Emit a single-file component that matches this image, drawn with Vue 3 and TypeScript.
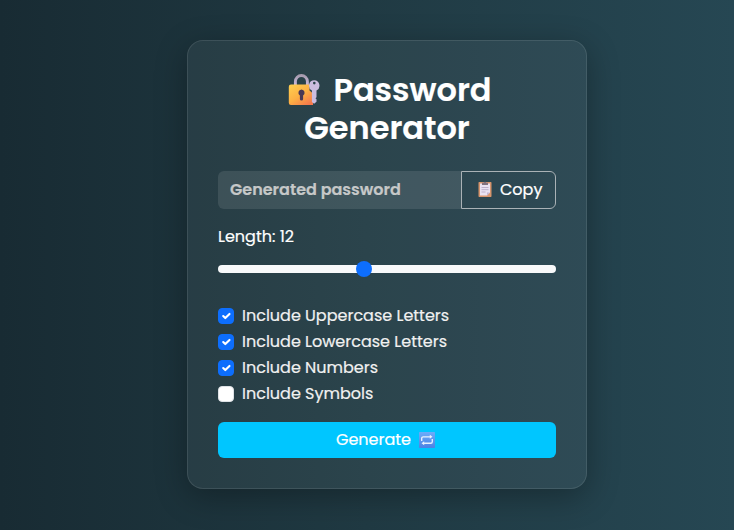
<script setup lang="ts">
import { computed, reactive, ref } from 'vue'

interface Option {
  id: string
  label: string
  chars: string
  checked: boolean
}

const length = ref(12)
const password = ref('')
const options = reactive<Option[]>([
  { id: 'uppercase', label: 'Include Uppercase Letters', chars: 'ABCDEFGHIJKLMNOPQRSTUVWXYZ', checked: true },
  { id: 'lowercase', label: 'Include Lowercase Letters', chars: 'abcdefghijklmnopqrstuvwxyz', checked: true },
  { id: 'numbers', label: 'Include Numbers', chars: '0123456789', checked: true },
  { id: 'symbols', label: 'Include Symbols', chars: '!@#$%^&*()_+', checked: false },
])

const pool = computed(() => options.filter((o) => o.checked).map((o) => o.chars).join(''))

function generate(): void {
  const chars = pool.value
  password.value = chars
    ? Array.from({ length: length.value }, () => chars[Math.floor(Math.random() * chars.length)]).join('')
    : ''
}

function copy(): void {
  if (password.value) navigator.clipboard?.writeText(password.value)
}
</script>

<template>
  <main class="page">
    <section class="card">
      <h1 class="title">
        <span class="title-line">
          <svg class="lock" viewBox="0 0 32 32" aria-hidden="true">
            <defs>
              <linearGradient id="gold" x1="0" y1="0" x2="0.8" y2="1">
                <stop offset="0" stop-color="#ffd04f" />
                <stop offset="0.55" stop-color="#fdb044" />
                <stop offset="1" stop-color="#f5784c" />
              </linearGradient>
              <linearGradient id="steel" x1="0" y1="0" x2="0" y2="1">
                <stop offset="0" stop-color="#a79caf" />
                <stop offset="1" stop-color="#cdbbe0" />
              </linearGradient>
            </defs>
            <path d="M7.4 12V7.500a6 6 0 0 1 12 0V12" fill="none" stroke="url(#steel)" stroke-width="2.9" />
            <path d="M3 10.500h18.500v6l3.500 3V31H3a2.200 2.200 0 0 1-2.200-2.200V12.700A2.200 2.200 0 0 1 3 10.500z" fill="url(#gold)" />
            <path d="M13.500 15.500a3.200 3.200 0 0 0-1.600 5.900V25a1.600 1.600 0 0 0 3.200 0v-3.600A3.200 3.200 0 0 0 13.500 15.500z" fill="#493755" />
            <path fill-rule="evenodd" d="M26.300 6.300a5.400 5.400 0 0 0-2.400 10.200V28l2.200 1.800 2.400-2v-2.600l-1-1 1-1v-6.700A5.400 5.400 0 0 0 26.300 6.300zm0 1.500a1.300 1.300 0 1 1 0 2.600 1.300 1.300 0 0 1 0-2.600z" fill="#cbbcdf" />
          </svg>
          <span>Password</span>
        </span>
        <span>Generator</span>
      </h1>

      <div class="output">
        <input v-model="password" class="password" type="text" placeholder="Generated password" readonly />
        <button class="copy" type="button" @click="copy">
          <svg class="clipboard" viewBox="0 0 14 16" aria-hidden="true">
            <rect x="0.500" y="1" width="13" height="15" rx="0.700" fill="#d8956d" />
            <path d="M2 2.500h10v9L9 14.500H2z" fill="#e9e2f2" />
            <path d="M12 11.500H9v3z" fill="#c3b4d2" />
            <path d="M4 4V1.700h1.700a1.400 1.400 0 0 1 2.600 0H10V4z" fill="#81727f" />
            <path d="M3.500 6.500h7M3.500 8.700h7M3.500 11h4" stroke="#b7aac6" stroke-width="0.900" />
          </svg>
          <span>Copy</span>
        </button>
      </div>

      <label class="length" for="length">Length: {{ length }}</label>
      <input id="length" v-model.number="length" class="range" type="range" min="6" max="20" />

      <div class="options">
        <label v-for="option in options" :key="option.id" class="option">
          <input v-model="option.checked" class="native" type="checkbox" />
          <span class="box" :class="{ on: option.checked }">
            <svg v-if="option.checked" viewBox="0 0 20 20" aria-hidden="true">
              <path d="m6 10 3 3 6-6" fill="none" stroke="#fff" stroke-width="3" stroke-linecap="round" stroke-linejoin="round" />
            </svg>
          </span>
          <span>{{ option.label }}</span>
        </label>
      </div>

      <button class="generate" type="button" @click="generate">
        <span>Generate</span>
        <svg class="repeat" viewBox="0 0 16 16" aria-hidden="true">
          <defs>
            <linearGradient id="tile" x1="0" y1="0" x2="0" y2="1">
              <stop offset="0" stop-color="#6cacfa" />
              <stop offset="1" stop-color="#4c82e4" />
            </linearGradient>
          </defs>
          <rect width="16" height="16" rx="0.800" fill="url(#tile)" />
          <path d="M2.700 9V6.300a1.500 1.500 0 0 1 1.500-1.500h7.500M13.300 7v2.700a1.500 1.500 0 0 1-1.500 1.500H4.300" fill="none" stroke="#e8f1ff" stroke-width="1.350" />
          <path d="M10.800 2.800 13.500 4.800 10.800 6.800zM5.200 9.200 2.500 11.200l2.700 2z" fill="#e8f1ff" />
        </svg>
      </button>
    </section>
  </main>
</template>

<style>
body {
  margin: 0;
}
</style>

<style scoped>
* {
  box-sizing: border-box;
}

.page {
  display: flex;
  align-items: flex-start;
  height: 530px;
  padding: 40px 0 0 187px;
  overflow: hidden;
  background: linear-gradient(to right, #182b33, #203a43 50%, #264753);
  color: #fff;
  font-family: Poppins, Inter, 'Noto Sans', sans-serif;
  font-size: 16px;
  line-height: 24px;
  -webkit-text-stroke: 0.2px currentColor;
}

.card {
  display: flex;
  flex-direction: column;
  width: 400px;
  height: 449px;
  padding: 30px;
  border: 1px solid rgba(255, 255, 255, 0.1);
  border-radius: 16px;
  background: rgba(255, 255, 255, 0.05);
  box-shadow: 0 8px 32px rgba(0, 0, 0, 0.3);
}

.title {
  display: flex;
  flex-direction: column;
  align-items: center;
  margin: 0 0 24px;
  font-size: 32px;
  font-weight: 600;
  line-height: 38px;
}

.title-line {
  display: flex;
  align-items: center;
  gap: 13px;
  padding-left: 6px;
}

.lock {
  width: 32px;
  height: 32px;
}

.output {
  display: flex;
  height: 38px;
  margin-bottom: 16px;
}

.password {
  flex: 1;
  min-width: 0;
  padding: 0 12px;
  border: 0;
  border-radius: 6px 0 0 6px;
  background: rgba(255, 255, 255, 0.1);
  color: #fff;
  font: inherit;
  font-weight: 600;
  outline: none;
}

.password::placeholder {
  color: #c6c8c8;
  opacity: 1;
}

.copy {
  display: flex;
  align-items: center;
  gap: 8px;
  width: 95px;
  padding: 0 0 0 16px;
  border: 1px solid #aab2b6;
  border-radius: 0 6px 6px 0;
  background: transparent;
  color: #fff;
  font: inherit;
}

.clipboard {
  width: 14px;
  height: 16px;
  margin-bottom: 2px;
}

.length {
  margin-bottom: 8px;
}

.range {
  width: 100%;
  height: 24px;
  margin: 0 0 23px;
  background: transparent;
  appearance: none;
}

.range::-webkit-slider-runnable-track {
  height: 8px;
  border-radius: 8px;
  background: #f8f9fa;
}

.range::-webkit-slider-thumb {
  width: 16px;
  height: 16px;
  margin-top: -4px;
  border-radius: 50%;
  background: #0d6efd;
  appearance: none;
}

.options {
  display: flex;
  flex-direction: column;
  gap: 2px;
  margin-bottom: 16px;
  color: #f1f1f1;
}

.option {
  display: flex;
  align-items: center;
  gap: 8px;
  height: 24px;
}

.native {
  position: absolute;
  opacity: 0;
}

.box {
  display: flex;
  width: 16px;
  height: 16px;
  border: 1px solid #dee2e6;
  border-radius: 4px;
  background: #fff;
}

.box.on {
  border-color: #0d6efd;
  background: #0d6efd;
}

.generate {
  display: flex;
  align-items: center;
  justify-content: center;
  gap: 8px;
  height: 36px;
  padding: 0 3px 0 0;
  border: 0;
  border-radius: 6px;
  background: #00c6ff;
  color: #fff;
  font: inherit;
}

.repeat {
  width: 16px;
  height: 16px;
}
</style>
